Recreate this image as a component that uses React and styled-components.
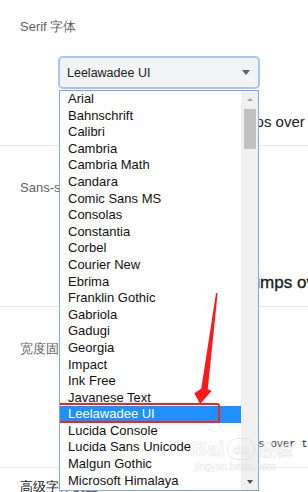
import React from "react";
import styled, { createGlobalStyle, css } from "styled-components";

const GlobalStyle = createGlobalStyle`
  html, body {
    margin: 0;
    padding: 0;
    background: #fff;
    font-family: "Liberation Sans", Arial, sans-serif;
  }
`;

const Page = styled.div`
  position: relative;
  width: 308px;
  height: 492px;
  overflow: hidden;
  background: #fff;
`;

const Section = styled.div`
  display: flex;
  flex-direction: column;
  padding: ${(p) => (p.$first ? "19px" : "34px")} 0 13px 20px;
  border-bottom: 1px solid #e8eaed;
`;

const Label = styled.div`
  font-size: 13px;
  line-height: 16px;
  color: ${(p) => (p.$dark ? "#202124" : "#5f6368")};
  white-space: nowrap;
`;

const LinkRow = styled.div`
  padding: 11px 0 0 20px;
`;

const Select = styled.div`
  box-sizing: border-box;
  display: flex;
  align-items: center;
  justify-content: space-between;
  width: 202px;
  height: 33px;
  margin: 21px 0 0 38px;
  padding: 0 8px 0 7px;
  border: 2px solid ${(p) => (p.$focused ? "#a6c5f7" : "transparent")};
  border-radius: 5px;
  background: #f1f3f4;
  background-clip: padding-box;
  font-size: 12.5px;
  color: #202124;
`;

const Caret = styled.span`
  width: 0;
  height: 0;
  border-left: 4.5px solid transparent;
  border-right: 4.5px solid transparent;
  border-top: 5px solid #5f6368;
`;

const Preview = styled.div`
  margin: 23px 0 0 ${(p) => p.$indent}px;
  height: 20px;
  line-height: 20px;
  white-space: nowrap;
  color: #202124;
  ${(p) =>
    p.$mono
      ? css`
          font-family: "Liberation Mono", "Courier New", monospace;
          font-size: 10.3px;
        `
      : css`
          font-size: ${p.$size}px;
          -webkit-text-stroke: ${p.$heavy ? "0.35px #202124" : "0"};
        `}
`;

const List = styled.div`
  position: absolute;
  left: 59px;
  top: 90px;
  width: 200px;
  height: 401px;
  box-sizing: border-box;
  border: 1px solid #86a5d9;
  background: #fff;
  display: flex;
  overflow: hidden;
`;

const Options = styled.div`
  flex: 1;
  display: flex;
  flex-direction: column;
`;

const Option = styled.div`
  position: relative;
  flex: none;
  height: 16.6px;
  line-height: 16.6px;
  padding-left: 8px;
  font-size: 13px;
  color: ${(p) => (p.$selected ? "#fff" : "#111")};
  background: ${(p) => (p.$selected ? "#1e90ff" : "transparent")};
  white-space: nowrap;
`;

const Marker = styled.span`
  position: absolute;
  left: -2px;
  top: -3px;
  width: 162px;
  height: 20px;
  box-sizing: border-box;
  border: 2px solid #ff1f1f;
  border-radius: 3px;
`;

const Scrollbar = styled.div`
  width: 17px;
  flex: none;
  background: #f0f0f0;
  display: flex;
  flex-direction: column;
  align-items: center;
  padding-top: 7px;
`;

const ArrowUp = styled.span`
  width: 0;
  height: 0;
  border-left: 3px solid transparent;
  border-right: 3px solid transparent;
  border-bottom: 3px solid #a3a3a3;
`;

const ArrowDown = styled.span`
  width: 0;
  height: 0;
  margin-top: auto;
  margin-bottom: 6px;
  border-left: 3px solid transparent;
  border-right: 3px solid transparent;
  border-top: 4px solid #505050;
`;

const Thumb = styled.div`
  width: 12px;
  height: 40px;
  margin-top: 8px;
  background: #c1c1c1;
`;

const Annotation = styled.svg`
  position: absolute;
  left: 0;
  top: 0;
  pointer-events: none;
`;

const Watermark = styled.div`
  position: absolute;
  left: 192px;
  top: 437px;
  display: flex;
  flex-direction: column;
  pointer-events: none;
  opacity: 0.45;
`;

const MarkTop = styled.div`
  display: flex;
  align-items: center;
  gap: 2px;
  font-weight: 700;
  font-size: 21px;
  line-height: 24px;
  color: #fafafa;
  -webkit-text-stroke: 0.7px #cfcfcf;
`;

const Paw = styled.span`
  display: inline-flex;
  align-items: center;
  justify-content: center;
  width: 26px;
  height: 20px;
  border-radius: 10px;
  border: 1px solid #cfcfcf;
  font-size: 13px;
  line-height: 1;
`;

const MarkCn = styled.span`
  font-family: "Noto Sans CJK SC", sans-serif;
  font-size: 17px;
  margin-left: 2px;
`;

const MarkUrl = styled.div`
  font-size: 10px;
  color: #f5f5f5;
  -webkit-text-stroke: 0.5px #d4d4d4;
  margin-left: 3px;
`;

const fonts = [
  "Arial",
  "Bahnschrift",
  "Calibri",
  "Cambria",
  "Cambria Math",
  "Candara",
  "Comic Sans MS",
  "Consolas",
  "Constantia",
  "Corbel",
  "Courier New",
  "Ebrima",
  "Franklin Gothic",
  "Gabriola",
  "Gadugi",
  "Georgia",
  "Impact",
  "Ink Free",
  "Javanese Text",
  "Leelawadee UI",
  "Lucida Console",
  "Lucida Sans Unicode",
  "Malgun Gothic",
  "Microsoft Himalaya",
  "Microsoft JhengHei",
];

const sample = "The quick brown fox jumps over the lazy dog";
const selected = "Leelawadee UI";

export default function App() {
  return (
    <>
      <GlobalStyle />
      <Page>
        <Section $first>
          <Label>Serif 字体</Label>
          <Select $focused>
            <span>{selected}</span>
            <Caret />
          </Select>
          <Preview $indent={73} $size={15}>{sample}</Preview>
        </Section>
        <Section>
          <Label>Sans-serif 字体</Label>
          <Select>
            <span>Microsoft YaHei</span>
            <Caret />
          </Select>
          <Preview $indent={70} $size={17} $heavy>{sample}</Preview>
        </Section>
        <Section>
          <Label>宽度固定字体</Label>
          <Select>
            <span>Consolas</span>
            <Caret />
          </Select>
          <Preview $indent={90} $mono>{sample}</Preview>
        </Section>
        <LinkRow>
          <Label $dark>高级字体设置</Label>
        </LinkRow>

        <List>
          <Options>
            {fonts.map((f) => (
              <Option key={f} $selected={f === selected}>
                {f}
                {f === selected && <Marker />}
              </Option>
            ))}
          </Options>
          <Scrollbar>
            <ArrowUp />
            <Thumb />
            <ArrowDown />
          </Scrollbar>
        </List>

        <Watermark>
          <MarkTop>
            <span>Bai</span>
            <Paw>du</Paw>
            <MarkCn>经验</MarkCn>
          </MarkTop>
          <MarkUrl>jingyan.baidu.com</MarkUrl>
        </Watermark>

        <Annotation width="308" height="492" viewBox="0 0 308 492">
          <polygon
            points="216,293 217.6,293.6 207.8,389 211.5,391 200.2,404 194.3,393.3 201.3,388.5"
            fill="#ff1a1a"
          />
        </Annotation>
      </Page>
    </>
  );
}
